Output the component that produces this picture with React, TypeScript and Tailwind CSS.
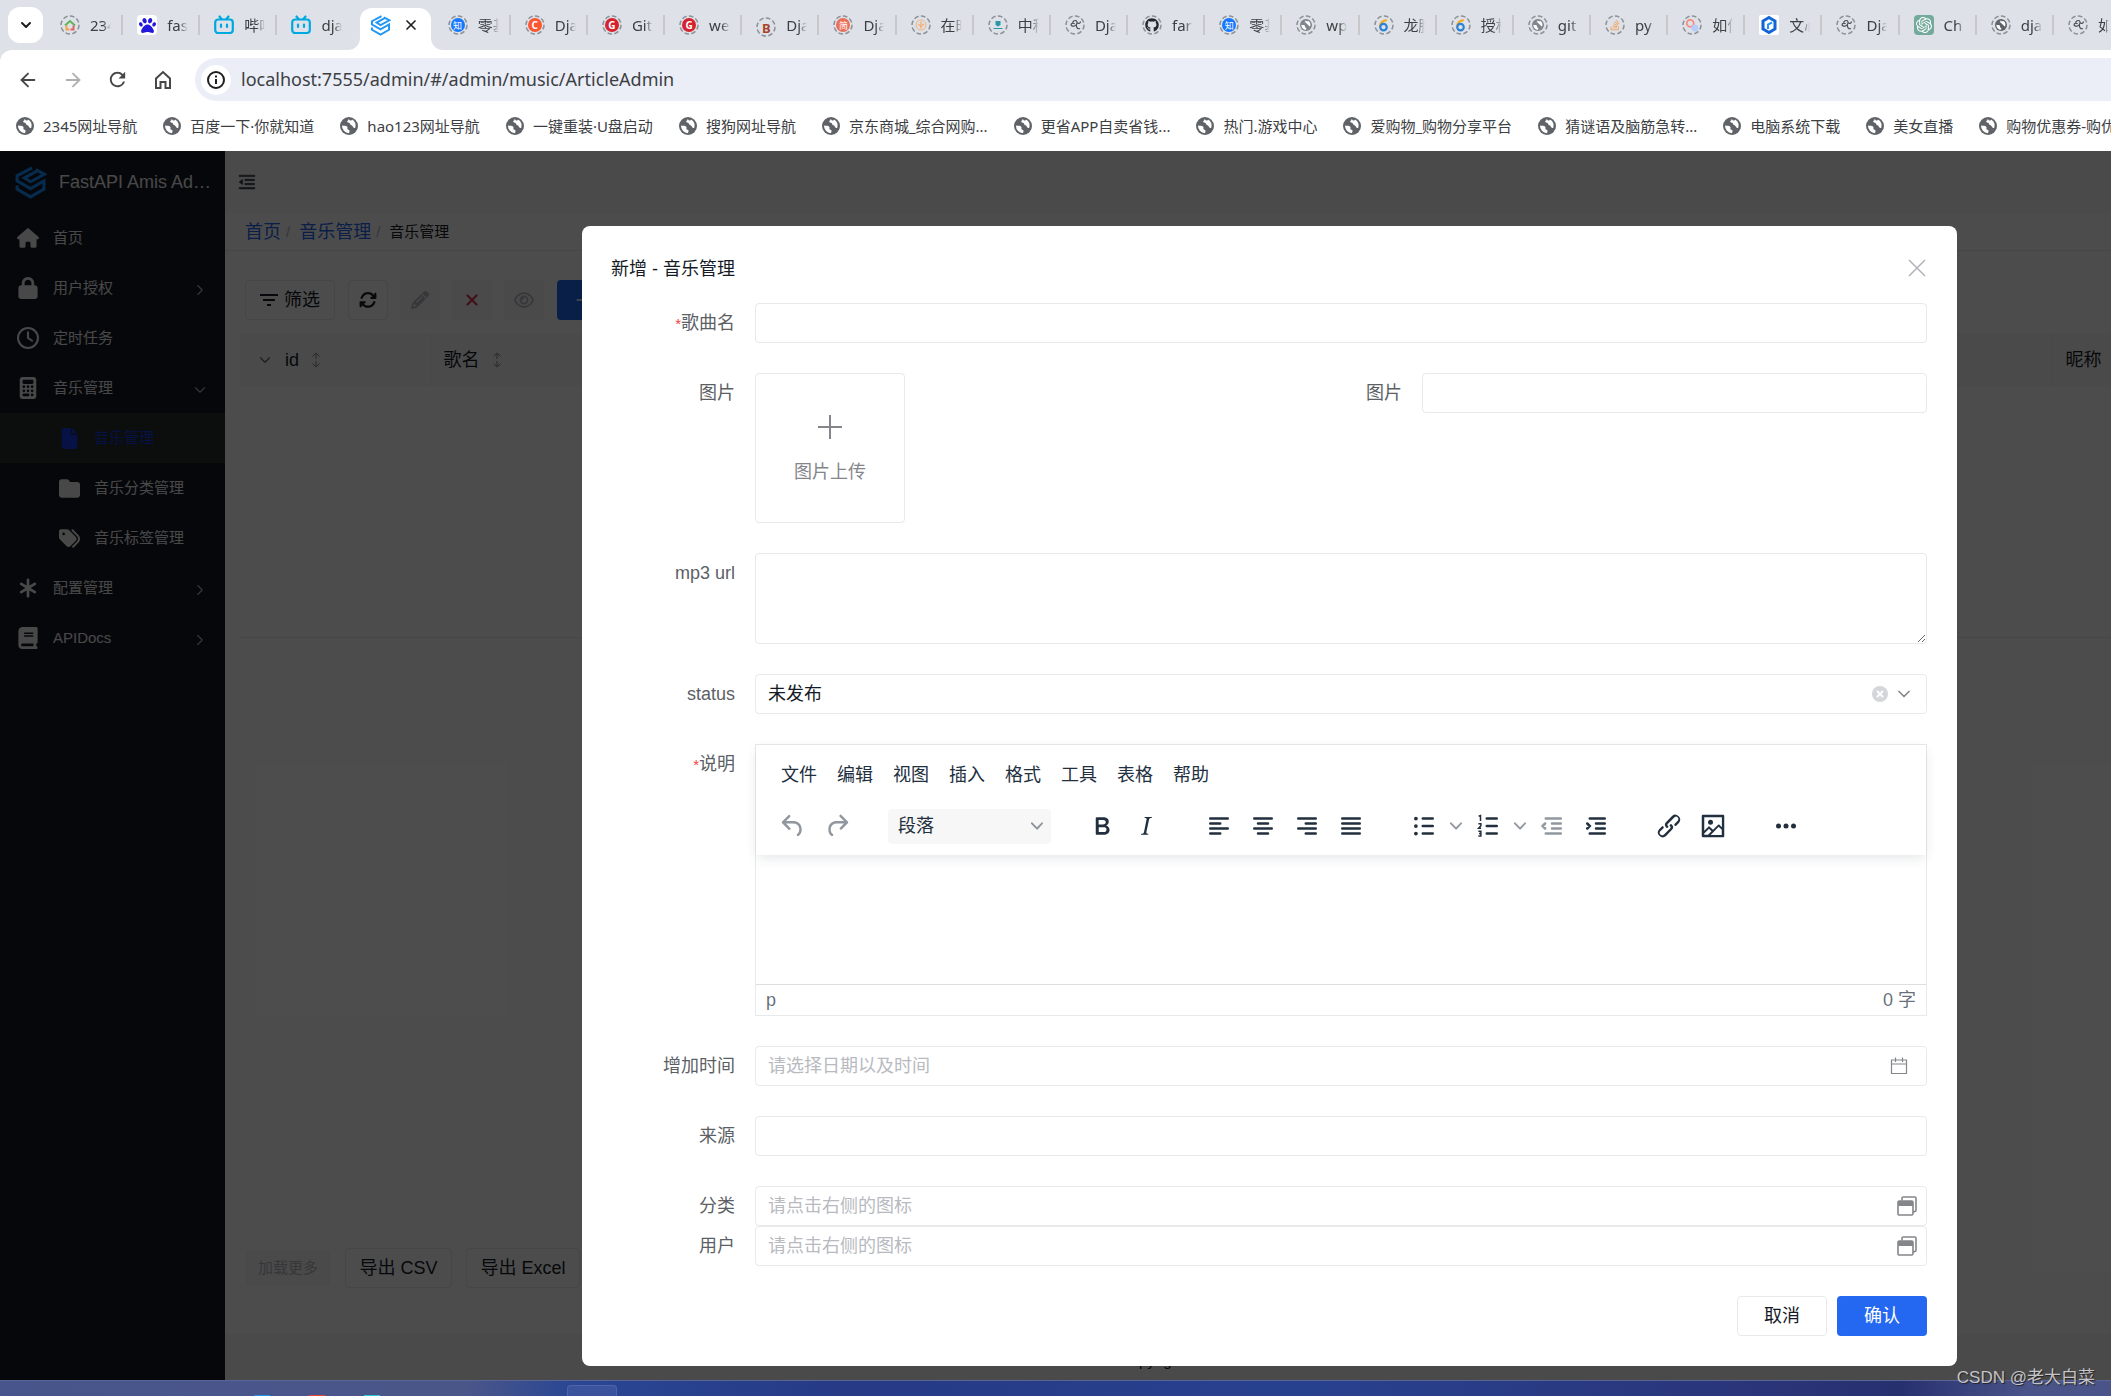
import { useState } from 'react'
import type { ReactNode } from 'react'
import clsx from 'clsx'
import { ArrowLeft, ArrowRight, ChevronDown, ChevronRight, Plus, X } from 'lucide-react'
import { AiOutlineMenuFold } from 'react-icons/ai'
import { MdRefresh } from 'react-icons/md'
import {
  FaArrowsRotate,
  FaAsterisk,
  FaBook,
  FaCalculator,
  FaFile,
  FaFolder,
  FaGithub,
  FaHouse,
  FaLock,
  FaPaw,
  FaPencil,
  FaRegClock,
  FaRegEye,
  FaStackOverflow,
  FaTags,
  FaXmark,
} from 'react-icons/fa6'
import { SiOpenai } from 'react-icons/si'

const UI_FONT = 'font-["Liberation_Sans","Noto_Sans_CJK_SC",sans-serif]'
const CHROME_FONT = 'font-["Noto_Sans","Noto_Sans_CJK_SC",sans-serif]'

/* ---------- small drawings ---------- */

function Globe({ className }: { className?: string }) {
  return (
    <svg viewBox="0 0 18 18" className={className} aria-hidden="true">
      <circle cx="9" cy="9" r="9" fill="currentColor" />
      <path
        d="M2 8.500c2 .6 4.200 0 5.200 1.200.9 1.100-.4 2 .6 2.900.8.7 1.900.2 1.700 1.600L9 16.200A7.300 7.300 0 0 1 2 8.500z"
        fill="#fff"
      />
      <path
        d="M8.500 1.800c.6 1.300-.9 1.600-1.300 2.500-.3.900.7 1.300 1.700 1.400 1.300.1.800 1.900 2.100 2.300 1.400.4 1.700 1.700 2.700 2.700.5.500 1.100.3 1.600 0A7.200 7.200 0 0 0 12 2.500c-.2 1-1.300 1.300-2 .9z"
        fill="#fff"
      />
    </svg>
  )
}

function AmisLogo({ className }: { className?: string }) {
  return (
    <svg viewBox="0 0 32 32" className={className} fill="none" stroke="currentColor" strokeWidth="3" aria-hidden="true">
      <path d="M17.500 1.800 3 9.500v5L16 22l13-7.500v8L16 30 3 22.500V19" />
      <path d="M23 4.500 10 11.500l6 3.800L29.500 8 21 3.500" />
    </svg>
  )
}

function Bilibili() {
  return (
    <svg viewBox="0 0 20 20" className="size-5" fill="none" stroke="#00a8e0" strokeWidth="2.200" strokeLinecap="round" aria-hidden="true">
      <rect x="1.200" y="4.500" width="17.600" height="13.500" rx="3" />
      <path d="M5.500 1.500 7.500 4M14.500 1.500 12.500 4M7 9.500v2.500M13 9.500v2.500" />
    </svg>
  )
}

type Favicon =
  | 'house' | 'baidu' | 'bili' | 'zhi' | 'c' | 'g' | 'three' | 'jian' | 'sun'
  | 'cloud' | 'scroll' | 'github' | 'globe' | 'six' | 'stack' | 'bubbles'
  | 'hex' | 'openai' | 'darkglobe'

const ringed: Partial<Record<Favicon, ReactNode>> = {
  house: (
    <svg viewBox="0 0 12 12" className="size-3" fill="none" strokeWidth="2">
      <path d="M1 6.500 6 2l5 4.500" stroke="#5fb35a" />
      <path d="M2.500 6.500v4h3" stroke="#f0a34a" />
      <path d="M6.500 10.500h3v-4" stroke="#e2606a" />
    </svg>
  ),
  zhi: <span className="flex size-[14px] items-center justify-center rounded-full bg-[#1677ff] text-[9px] leading-none text-white">知</span>,
  c: <span className="flex size-[14px] items-center justify-center rounded-full bg-[#fc5531] text-[10px] leading-none font-bold text-white">C</span>,
  g: <span className="flex size-[14px] items-center justify-center rounded-full bg-[#d4232f] text-[10px] leading-none font-bold text-white">G</span>,
  three: <span className="text-[13px] leading-none font-bold text-[#a8422c]">B</span>,
  jian: <span className="flex size-[14px] items-center justify-center rounded-full bg-[#ea6f5a] text-[9px] leading-none text-white">简</span>,
  sun: (
    <svg viewBox="0 0 12 12" className="size-3" fill="none" stroke="#f3b27a">
      <circle cx="6" cy="6" r="5" />
      <path d="M6 2.500v7M3 5l3 2.500L9 5" strokeWidth="1.500" />
    </svg>
  ),
  cloud: (
    <svg viewBox="0 0 12 12" className="size-3" fill="#2a97a5">
      <path d="M3.500 2h5v4l-2.500 1.500L3.500 6zM1.500 9h9v1h-9z" />
    </svg>
  ),
  scroll: (
    <svg viewBox="0 0 12 12" className="size-3" fill="none" stroke="#4b4f55" strokeWidth="1.200">
      <path d="M3.500 3.500C5 .5 8.500 1 8 4S4 8 2.500 6.500 4 3 5.500 5" />
      <path d="M8 4c2 1 3.500 0 3.500-1.500M7.500 5.500C7 8 8.500 10.500 11 9.500" />
    </svg>
  ),
  github: <FaGithub className="size-[14px] text-[#24292f]" />,
  globe: <Globe className="size-3 text-[#80868b]" />,
  darkglobe: <Globe className="size-3 text-[#5f6368]" />,
  six: (
    <svg viewBox="0 0 12 12" className="size-[13px]" fill="none" strokeWidth="2">
      <path d="M9 1C5 1.500 3 4 2.500 7" stroke="#f2a91f" />
      <circle cx="6" cy="7.500" r="3" stroke="#2b82d9" />
    </svg>
  ),
  stack: <FaStackOverflow className="size-3 text-[#f2a668]" />,
  bubbles: (
    <svg viewBox="0 0 12 12" className="size-[14px]">
      <circle cx="4.500" cy="4.500" r="3" fill="none" stroke="#f58a7c" strokeWidth="1.500" />
      <circle cx="8.500" cy="8.500" r="3" fill="#b5cdf8" />
    </svg>
  ),
}

function TabIcon({ kind }: { kind: Favicon }) {
  if (kind === 'bili') return <Bilibili />
  if (kind === 'baidu') {
    return (
      <span className="flex size-5 items-center justify-center rounded-sm bg-white">
        <FaPaw className="size-[17px] text-[#2319dc]" />
      </span>
    )
  }
  if (kind === 'hex') {
    return (
      <svg viewBox="0 0 20 20" className="size-5" aria-hidden="true">
        <rect width="20" height="20" rx="2" fill="#fff" />
        <path d="M10 2.500 16 6v8l-6 3.500L4 14V6z" fill="none" stroke="#1265d6" strokeWidth="3" />
        <path d="M9 14V9.500l4-2" fill="none" stroke="#2196f3" strokeWidth="2" />
      </svg>
    )
  }
  if (kind === 'openai') {
    return (
      <span className="flex size-5 items-center justify-center rounded bg-[#74aa9c]">
        <SiOpenai className="size-4 text-white" />
      </span>
    )
  }
  return (
    <span className="grid size-5 place-items-center">
      <svg viewBox="0 0 20 20" className="col-start-1 row-start-1 size-5" aria-hidden="true">
        <circle cx="10" cy="10" r="9" fill="none" stroke="#8d9297" strokeWidth="1.500" strokeDasharray="4.700 2.300" />
      </svg>
      <span className="col-start-1 row-start-1">{ringed[kind]}</span>
    </span>
  )
}

/* ---------- browser chrome ---------- */

type Tab = { icon: Favicon; title: string }

const tabsBefore: Tab[] = [
  { icon: 'house', title: '234' },
  { icon: 'baidu', title: 'fas' },
  { icon: 'bili', title: '哔哩' },
  { icon: 'bili', title: 'dja' },
]

const tabsAfter: Tab[] = [
  { icon: 'zhi', title: '零基' },
  { icon: 'c', title: 'Dja' },
  { icon: 'g', title: 'Git' },
  { icon: 'g', title: 'we' },
  { icon: 'three', title: 'Dja' },
  { icon: 'jian', title: 'Dja' },
  { icon: 'sun', title: '在时' },
  { icon: 'cloud', title: '中科' },
  { icon: 'scroll', title: 'Dja' },
  { icon: 'github', title: 'far' },
  { icon: 'zhi', title: '零基' },
  { icon: 'globe', title: 'wp' },
  { icon: 'six', title: '龙腾' },
  { icon: 'six', title: '授权' },
  { icon: 'globe', title: 'git' },
  { icon: 'stack', title: 'py' },
  { icon: 'bubbles', title: '如何' },
  { icon: 'hex', title: '文心' },
  { icon: 'scroll', title: 'Dja' },
  { icon: 'openai', title: 'Ch' },
  { icon: 'darkglobe', title: 'dja' },
]

function BrowserTab({ tab, divider = true }: { tab: Tab; divider?: boolean }) {
  return (
    <button
      type="button"
      className={clsx(
        'my-auto flex h-5 min-w-0 flex-1 items-center gap-[10px] border-r-2 pl-[14px]',
        divider ? 'border-[#c8c8cb]' : 'border-transparent',
      )}
    >
      <span className="shrink-0">
        <TabIcon kind={tab.icon} />
      </span>
      <span className="w-[21px] overflow-hidden text-left text-[15px] leading-5 whitespace-nowrap text-[#3c4043] [mask-image:linear-gradient(to_right,#000_60%,transparent)]">
        {tab.title}
      </span>
    </button>
  )
}

const bookmarks = [
  '2345网址导航',
  '百度一下·你就知道',
  'hao123网址导航',
  '一键重装·U盘启动',
  '搜狗网址导航',
  '京东商城_综合网购...',
  '更省APP自卖省钱...',
  '热门.游戏中心',
  '爱购物_购物分享平台',
  '猜谜语及脑筋急转...',
  '电脑系统下载',
  '美女直播',
  '购物优惠券-购优惠',
]

function BrowserChrome() {
  return (
    <header className={clsx('overflow-hidden bg-[#dee2e8]', CHROME_FONT)}>
      <div className="flex h-[50px]">
        <button type="button" aria-label="搜索标签页" className="my-[7px] ml-2 flex w-[35px] shrink-0 items-center justify-center rounded-xl bg-white">
          <ChevronDown className="size-4 text-[#1f1f1f]" strokeWidth={3} />
        </button>
        <div className="ml-[3px] flex min-w-0 flex-1">
          {tabsBefore.map((tab, index) => (
            <BrowserTab key={index} tab={tab} divider={index < 3} />
          ))}
          <div className="flex w-[79px] shrink-0 items-end pr-[3px] pl-[5px]">
            <div className="relative flex h-[42px] w-full items-center justify-between rounded-t-xl bg-white pr-3 pl-[10px] pb-2">
              <svg viewBox="0 0 12 12" className="absolute bottom-0 -left-3 size-3" aria-hidden="true">
                <path d="M12 0v12H0A12 12 0 0 0 12 0z" fill="#fff" />
              </svg>
              <AmisLogo className="size-[21px] text-[#2196f3]" />
              <button type="button" aria-label="关闭标签页">
                <X className="size-4 text-[#1f1f1f]" strokeWidth={2.5} />
              </button>
              <svg viewBox="0 0 12 12" className="absolute -right-3 bottom-0 size-3" aria-hidden="true">
                <path d="M0 0v12h12A12 12 0 0 1 0 0z" fill="#fff" />
              </svg>
            </div>
          </div>
          {tabsAfter.map((tab, index) => (
            <BrowserTab key={index} tab={tab} />
          ))}
          <div className="flex w-[57px] shrink-0 overflow-hidden">
            <BrowserTab tab={{ icon: 'scroll', title: '如何' }} divider={false} />
          </div>
        </div>
      </div>

      <div className="rounded-tl-xl bg-white">
        <div className="flex items-center pt-2 pl-[5px]">
          <button type="button" aria-label="后退" className="flex w-[45px] justify-center text-[#474747]">
            <ArrowLeft className="size-[22px]" />
          </button>
          <button type="button" aria-label="前进" className="flex w-[45px] justify-center text-[#b0b0b0]">
            <ArrowRight className="size-[22px]" />
          </button>
          <button type="button" aria-label="重新加载" className="flex w-[45px] justify-center text-[#474747]">
            <MdRefresh className="size-[23px]" />
          </button>
          <button type="button" aria-label="主页" className="flex w-[45px] justify-center text-[#474747]">
            <svg viewBox="0 0 20 20" className="size-5" fill="none" stroke="currentColor" strokeWidth="2" aria-hidden="true">
              <path d="M3 8.500 10 2l7 6.500V18h-4.500v-6h-5v6H3z" />
            </svg>
          </button>
          <div className="ml-[10px] flex h-[43px] flex-1 items-center rounded-l-full bg-[#ebeef7] pl-[6px]">
            <span className="flex size-[30px] items-center justify-center rounded-full bg-white">
              <svg viewBox="0 0 18 18" className="size-[18px]" fill="none" stroke="#1f1f1f" strokeWidth="2" aria-hidden="true">
                <circle cx="9" cy="9" r="8" />
                <path d="M9 8v5M9 4.500v2" />
              </svg>
            </span>
            <input
              aria-label="地址栏"
              className="ml-[10px] flex-1 bg-transparent text-[18px] text-[#3c4043] outline-none"
              defaultValue="localhost:7555/admin/#/admin/music/ArticleAdmin"
            />
          </div>
        </div>
        <nav className="flex h-[50px] items-center gap-[26px] overflow-hidden pl-4">
          {bookmarks.map((name) => (
            <a key={name} href="#" className="flex shrink-0 items-center gap-[9px] text-[15px] whitespace-nowrap text-[#3c4043]">
              <Globe className="size-[18px] text-[#5f6368]" />
              {name}
            </a>
          ))}
        </nav>
      </div>
    </header>
  )
}

/* ---------- admin page behind the dialog ---------- */

type MenuItem = {
  label: string
  icon: ReactNode
  arrow?: 'right' | 'down'
  sub?: boolean
  active?: boolean
}

const menu: MenuItem[] = [
  { label: '首页', icon: <FaHouse /> },
  { label: '用户授权', icon: <FaLock />, arrow: 'right' },
  { label: '定时任务', icon: <FaRegClock /> },
  { label: '音乐管理', icon: <FaCalculator />, arrow: 'down' },
  { label: '音乐管理', icon: <FaFile />, sub: true, active: true },
  { label: '音乐分类管理', icon: <FaFolder />, sub: true },
  { label: '音乐标签管理', icon: <FaTags />, sub: true },
  { label: '配置管理', icon: <FaAsterisk />, arrow: 'right' },
  { label: 'APIDocs', icon: <FaBook />, arrow: 'right' },
]

function Sidebar() {
  return (
    <aside className="w-[225px] shrink-0 bg-[#141923] text-[#f0f0f0]">
      <div className="flex h-[62px] items-center pl-[14px]">
        <AmisLogo className="size-[33px] shrink-0 text-[#1890ff]" />
        <span className="ml-3 w-[154px] truncate text-[18px]">FastAPI Amis Admin</span>
      </div>
      <ul>
        {menu.map((item, index) => (
          <li key={index}>
            <a
              href="#"
              className={clsx(
                'flex h-[50px] items-center gap-[14px] pr-4',
                item.sub ? 'pl-[58px]' : 'pl-[17px]',
                item.active && 'bg-[#282c2e] text-[#143ce6]',
              )}
            >
              <span className={clsx('flex w-[22px] justify-center', item.sub ? 'text-[21px]' : 'text-[22px]')}>
                {item.icon}
              </span>
              <span className="flex-1 text-[15px]">{item.label}</span>
              {item.arrow === 'right' && <ChevronRight className="mt-1 size-[18px] text-[#b4b6ba]" strokeWidth={1.5} />}
              {item.arrow === 'down' && <ChevronDown className="mt-1 size-[18px] text-[#b4b6ba]" strokeWidth={1.5} />}
            </a>
          </li>
        ))}
      </ul>
    </aside>
  )
}

function SortIcon() {
  return (
    <svg viewBox="0 0 10 16" className="h-4 w-[10px] text-[#84868c]" fill="none" stroke="currentColor" aria-hidden="true">
      <path d="M5 7V1M1.500 4.500 5 1l3.500 3.500M5 9v6M1.500 11.500 5 15l3.500-3.500" />
    </svg>
  )
}

function FilterIcon() {
  return (
    <svg viewBox="0 0 18 14" className="h-[14px] w-[18px]" fill="none" stroke="currentColor" strokeWidth="2" aria-hidden="true">
      <path d="M0 2h18M3 7h12M7 12h4" />
    </svg>
  )
}

const toolButton = 'flex size-10 items-center justify-center rounded'

function ListPage() {
  return (
    <div className="flex min-w-0 flex-1 flex-col bg-[#f7f7f9]">
      <div className="flex h-[62px] items-center pl-3">
        <button type="button" aria-label="收起菜单">
          <AiOutlineMenuFold className="size-5 text-[#151b26]/80" stroke="currentColor" strokeWidth="30" />
        </button>
      </div>
      <nav className="flex h-[38px] items-center border-b border-[#e8e9eb] bg-white pt-[2px] pl-5 text-[18px]">
        <a href="#" className="text-[#2468f2]">首页</a>
        <span className="mx-[5px] text-[15px] text-[#b8babf]">/</span>
        <a href="#" className="ml-1 text-[#2468f2]">音乐管理</a>
        <span className="mx-[5px] text-[15px] text-[#b8babf]">/</span>
        <span className="ml-1 text-[15px] text-[#151b26]">音乐管理</span>
      </nav>
      <div className="flex flex-1 flex-col bg-white">
        <div className="flex h-[69px] items-end gap-[13px] pl-5 text-[#151b26]">
          <button type="button" className="flex h-10 w-[90px] items-center justify-center gap-[6px] rounded border border-[#e8e9eb] text-[18px]">
            <FilterIcon />
            筛选
          </button>
          <div className="flex gap-3">
            <button type="button" aria-label="刷新" className={clsx(toolButton, 'border border-[#e8e9eb]')}>
              <FaArrowsRotate className="size-[18px]" />
            </button>
            <button type="button" aria-label="编辑" className={clsx(toolButton, 'bg-[#f7f7f9] text-[#b8babf]')}>
              <FaPencil className="size-[18px]" />
            </button>
            <button type="button" aria-label="删除" className={clsx(toolButton, 'bg-[#f7f7f9] text-[#e03a52]')}>
              <FaXmark className="size-[18px]" />
            </button>
            <button type="button" aria-label="查看" className={clsx(toolButton, 'bg-[#f7f7f9] text-[#b8babf]')}>
              <FaRegEye className="size-5" />
            </button>
          </div>
          <button type="button" className="flex h-10 items-center gap-2 rounded bg-[#2468f2] px-4 text-[18px] text-white">
            <Plus className="size-5" />
            新增
          </button>
        </div>
        <div className="mt-[13px] ml-[15px] h-[305px] border-b border-[#e8e9eb]">
          <table className="w-full table-fixed text-left text-[18px] text-[#151b26]">
            <thead>
              <tr className="h-[54px] bg-[#f7f7f9]">
                <th className="w-[191px] border-r border-[#f0f0f2] pl-[16px] font-normal">
                  <span className="flex items-center">
                    <ChevronDown className="mr-[11px] size-[18px] text-[#5c5f66]" strokeWidth={1.5} />
                    id
                    <span className="ml-3"><SortIcon /></span>
                  </span>
                </th>
                <th className="border-r border-[#f0f0f2] pl-3 font-normal">
                  <span className="flex items-center gap-3">
                    歌名
                    <SortIcon />
                  </span>
                </th>
                <th className="w-[59px] pl-[13px] font-normal whitespace-nowrap">昵称</th>
              </tr>
            </thead>
          </table>
        </div>
        <div className="mt-auto flex items-center gap-[14px] pb-[46px] pl-5 text-[18px] text-[#151b26]">
          <button type="button" disabled className="h-9 w-[86px] rounded bg-[#f7f7f9] text-[15px] text-[#b8babf]">加载更多</button>
          <button type="button" className="h-10 w-[107px] rounded border border-[#e8e9eb]">导出 CSV</button>
          <button type="button" className="h-10 w-[114px] rounded border border-[#e8e9eb]">导出 Excel</button>
        </div>
      </div>
      <footer className="flex h-[46px] items-end justify-center pr-8 pb-2 text-[15px] text-[#151b26]">Copyright</footer>
    </div>
  )
}

/* ---------- dialog ---------- */

const control = 'block h-10 w-full rounded border border-[#e8e9eb] bg-white px-3 text-[18px] text-[#151b26] outline-none placeholder:text-[#b8babf]'

function Field({ id, label, required, children }: { id: string; label: string; required?: boolean; children: ReactNode }) {
  return (
    <div className="flex flex-1 items-start gap-5">
      <label htmlFor={id} className="w-[124px] shrink-0 text-right text-[18px] leading-10 text-[#5c5f66]">
        {required && <span className="text-[15px] leading-none text-[#f33e3e]">*</span>}
        {label}
      </label>
      <div className="min-w-0 flex-1">{children}</div>
    </div>
  )
}

function ToolButton({ label, muted, children }: { label: string; muted?: boolean; children: ReactNode }) {
  return (
    <button
      type="button"
      aria-label={label}
      className={clsx('flex h-[42px] w-11 items-center justify-center', muted ? 'text-[#222f3e]/50' : 'text-[#222f3e]')}
    >
      <svg viewBox="0 0 24 24" className="size-[30px]" fill="currentColor" fillRule="evenodd">
        {children}
      </svg>
    </button>
  )
}

function SmallChevron() {
  return (
    <svg viewBox="0 0 10 10" className="size-3 shrink-0 text-[#222f3e]/50" fill="currentColor" aria-hidden="true">
      <path d="M8.700 2.200c.3-.3.8-.3 1 0 .4.4.4.9 0 1.200L5.700 7.800c-.3.3-.9.3-1.200 0L.2 3.400a.8.8 0 0 1 0-1.200c.3-.3.8-.3 1.100 0L5 6l3.700-3.800z" />
    </svg>
  )
}

function Lines({ d }: { d: string }) {
  return <path d={d} fill="none" stroke="currentColor" strokeWidth="2" strokeLinecap="round" />
}

const editorMenus = ['文件', '编辑', '视图', '插入', '格式', '工具', '表格', '帮助']

function RichEditor() {
  return (
    <div className="border border-[#e8e9eb]">
      <div className="relative h-[110px] bg-white shadow-[0_4px_12px_-2px_rgba(34,47,62,0.14)]">
        <div className="flex h-[60px] items-center gap-5 pl-[25px] text-[18px] text-[#222f3e]">
          {editorMenus.map((name) => (
            <button key={name} type="button">{name}</button>
          ))}
        </div>
        <div className="flex h-[42px] items-center gap-[29px] pl-[15px]">
          <div className="flex">
            <ToolButton label="撤销" muted>
              <path d="M6.400 8H12c3.700 0 6.200 2 6.800 5.100.6 2.700-.4 5.600-2.300 6.800a1 1 0 0 1-1-1.800c1.100-.6 1.800-2.700 1.400-4.600-.5-2.100-2.100-3.500-4.900-3.500H6.400l3.300 3.300a1 1 0 1 1-1.400 1.400l-5-5a1 1 0 0 1 0-1.400l5-5a1 1 0 0 1 1.400 1.400L6.400 8z" />
            </ToolButton>
            <ToolButton label="重做" muted>
              <path d="M17.600 10H12c-2.800 0-4.400 1.400-4.900 3.500-.4 2 .3 4 1.400 4.600a1 1 0 1 1-1 1.800c-2-1.200-2.900-4.100-2.300-6.800.6-3 3-5.100 6.800-5.100h5.600l-3.300-3.300a1 1 0 1 1 1.400-1.400l5 5a1 1 0 0 1 0 1.400l-5 5a1 1 0 0 1-1.400-1.400l3.300-3.300z" />
            </ToolButton>
          </div>
          <button type="button" className="flex h-[35px] w-[163px] items-center justify-between rounded bg-[#f7f7f7] pr-2 pl-[10px] text-[18px] text-[#222f3e]">
            段落
            <SmallChevron />
          </button>
          <div className="flex">
            <ToolButton label="粗体">
              <path d="M7.800 19c-.3 0-.5 0-.6-.2l-.2-.5V5.700c0-.2 0-.4.2-.5l.6-.2h5c1.500 0 2.700.3 3.500 1 .7.6 1.100 1.400 1.100 2.500a3 3 0 0 1-.6 1.900c-.4.6-1 1-1.600 1.200.4.1.9.3 1.300.6s.8.7 1 1.200c.4.4.5 1 .5 1.600 0 1.300-.4 2.300-1.300 3-.8.7-2.100 1-3.800 1H7.800zm5-8.300c.6 0 1.200-.1 1.600-.5.4-.3.6-.7.6-1.300 0-1.100-.8-1.700-2.300-1.700H9.300v3.500h3.400zm.5 6c.7 0 1.300-.1 1.700-.4.4-.4.6-.9.6-1.500s-.2-1-.7-1.400c-.4-.3-1-.4-2-.4H9.400v3.800h4z" />
            </ToolButton>
            <ToolButton label="斜体">
              <path d="M16.700 4.700l-.1.9h-.3c-.6 0-1 0-1.400.3-.3.3-.4.6-.5 1.100l-2.100 9.800v.6c0 .5.4.8 1.400.8h.2l-.2.8H8l.2-.8h.2c1.100 0 1.800-.5 2-1.500l2-9.800.1-.5c0-.6-.4-.8-1.400-.8h-.3l.2-.9h5.800z" />
            </ToolButton>
          </div>
          <div className="flex">
            <ToolButton label="左对齐"><Lines d="M5 6h14M5 10h8M5 14h14M5 18h8" /></ToolButton>
            <ToolButton label="居中"><Lines d="M5 6h14M8 10h8M5 14h14M8 18h8" /></ToolButton>
            <ToolButton label="右对齐"><Lines d="M5 6h14M11 10h8M5 14h14M11 18h8" /></ToolButton>
            <ToolButton label="两端对齐"><Lines d="M5 6h14M5 10h14M5 14h14M5 18h14" /></ToolButton>
          </div>
          <div className="flex items-center">
            <ToolButton label="项目符号列表">
              <Lines d="M11 6h8M11 12h8M11 18h8" />
              <circle cx="5.500" cy="6" r="1.500" />
              <circle cx="5.500" cy="12" r="1.500" />
              <circle cx="5.500" cy="18" r="1.500" />
            </ToolButton>
            <button type="button" aria-label="项目符号样式" className="flex w-5 justify-center"><SmallChevron /></button>
            <ToolButton label="编号列表">
              <Lines d="M11 6h8M11 12h8M11 18h8" />
              <path d="M4.500 4.200 6 3.700V8M4.300 10.200h2v1.600l-1.800 2h2M4.300 16.200h2v3.700h-2M4.800 18h1.500" fill="none" stroke="currentColor" strokeWidth="1.200" />
            </ToolButton>
            <button type="button" aria-label="编号样式" className="flex w-5 justify-center"><SmallChevron /></button>
            <ToolButton label="减少缩进" muted><Lines d="M7 6h12M12 10h7M12 14h7M7 18h12M6.500 10l-2 2 2 2" /></ToolButton>
            <ToolButton label="增加缩进"><Lines d="M7 6h12M12 10h7M12 14h7M7 18h12M5 10l2 2-2 2" /></ToolButton>
          </div>
          <div className="flex">
            <ToolButton label="链接">
              <path d="M6.200 12.300a1 1 0 0 1 1.400 1.400l-2.100 2a2 2 0 1 0 2.700 2.800l4.800-4.800a1 1 0 0 0 0-1.400 1 1 0 1 1 1.400-1.300 2.900 2.900 0 0 1 0 4L9.600 20a3.900 3.900 0 0 1-5.500-5.500l2-2zm11.600-.6a1 1 0 0 1-1.400-1.400l2-2a2 2 0 1 0-2.600-2.800L11 10.300a1 1 0 0 0 0 1.400A1 1 0 1 1 9.600 13a2.900 2.900 0 0 1 0-4L14.400 4a3.900 3.900 0 0 1 5.500 5.500l-2 2z" />
            </ToolButton>
            <ToolButton label="图片">
              <path d="M5 15.700l3.300-3.200c.3-.3.7-.3 1 0L12 15l4.100-4c.3-.4.8-.4 1 0l2 1.900V5H5v10.700zM5 18V19h3l2.800-2.900-2-2L5 17.900zm14-3l-2.500-2.400-6.400 6.500H19v-4zM4 3h16c.6 0 1 .4 1 1v16c0 .6-.4 1-1 1H4a1 1 0 0 1-1-1V4c0-.6.4-1 1-1zm6 8a2 2 0 1 0 0-4 2 2 0 0 0 0 4z" />
            </ToolButton>
          </div>
          <ToolButton label="更多">
            <circle cx="6" cy="12" r="2" />
            <circle cx="12" cy="12" r="2" />
            <circle cx="18" cy="12" r="2" />
          </ToolButton>
        </div>
      </div>
      <textarea id="content" className="block h-[129px] w-full resize-none p-3 text-[18px] outline-none" />
      <div className="flex h-[31px] items-center justify-between border-t border-[#dcdee0] px-[10px] text-[18px] text-[#222f3e]/70">
        <span>p</span>
        <span>0 字</span>
      </div>
    </div>
  )
}

function PickerField({ id, label }: { id: string; label: string }) {
  return (
    <Field id={id} label={label}>
      <div className="flex h-10 items-center rounded border border-[#e8e9eb] pr-[9px] pl-3">
        <input
          id={id}
          placeholder="请点击右侧的图标"
          className="min-w-0 flex-1 text-[18px] outline-none placeholder:text-[#b8babf]"
        />
        <button type="button" aria-label="选择" className="text-[#84868c]">
          <svg viewBox="0 0 20 20" className="size-5" fill="none" stroke="currentColor" strokeWidth="1.600">
            <path d="M5 4.500V2.300A1.300 1.300 0 0 1 6.300 1h11.400A1.300 1.300 0 0 1 19 2.300v12a1.300 1.300 0 0 1-1.300 1.300H16" />
            <rect x="1" y="5" width="15" height="14" rx="1.300" />
            <path d="M1 5h15v5H1z" fill="currentColor" stroke="none" />
          </svg>
        </button>
      </div>
    </Field>
  )
}

function ArticleDialog() {
  const [status, setStatus] = useState('draft')

  return (
    <div role="dialog" aria-label="新增 - 音乐管理" className="min-w-0 flex-1 self-start rounded-lg bg-white pr-[30px] pb-[30px] pl-[29px]">
      <div className="flex h-[77px] items-center justify-between pt-[7px]">
        <h2 className="pt-[3px] text-[18px] text-[#151b26]">新增 - 音乐管理</h2>
        <button type="button" aria-label="关闭" className="text-[#b0b2b8]">
          <svg viewBox="0 0 20 20" className="size-5" fill="none" stroke="currentColor" strokeWidth="1.500">
            <path d="M2 2l16 16M18 2 2 18" />
          </svg>
        </button>
      </div>

      <form className="flex flex-col gap-[30px]">
        <Field id="name" label="歌曲名" required>
          <input id="name" className={control} />
        </Field>

        <div className="flex gap-[18px]">
          <Field id="upload" label="图片">
            <button id="upload" type="button" className="flex size-[150px] flex-col items-center justify-center gap-5 rounded border border-[#e8e9eb] pt-1 text-[18px] text-[#84868c]">
              <svg viewBox="0 0 24 24" className="size-6" fill="none" stroke="currentColor" strokeWidth="2">
                <path d="M12 0v24M0 12h24" />
              </svg>
              图片上传
            </button>
          </Field>
          <Field id="image-url" label="图片">
            <input id="image-url" className={control} />
          </Field>
        </div>

        <Field id="mp3" label="mp3 url">
          <textarea id="mp3" className="block h-[91px] w-full resize-y rounded border border-[#e8e9eb] p-3 text-[18px] outline-none" />
        </Field>

        <Field id="status" label="status">
          <div className="flex h-10 items-center rounded border border-[#e8e9eb] pr-3 pl-3">
            <select
              id="status"
              value={status}
              onChange={(e) => setStatus(e.target.value)}
              className="min-w-0 flex-1 appearance-none bg-transparent text-[18px] text-[#151b26] outline-none"
            >
              <option value="draft">未发布</option>
              <option value="published">已发布</option>
            </select>
            <button type="button" aria-label="清除" className="mr-[6px]">
              <svg viewBox="0 0 16 16" className="size-4">
                <circle cx="8" cy="8" r="8" fill="#d4d6da" />
                <path d="M5 5l6 6M11 5l-6 6" stroke="#fff" strokeWidth="1.800" />
              </svg>
            </button>
            <ChevronDown className="size-5 text-[#84868c]" strokeWidth={2} />
          </div>
        </Field>

        <Field id="content" label="说明" required>
          <RichEditor />
        </Field>

        <Field id="created" label="增加时间">
          <div className="flex h-10 items-center rounded border border-[#e8e9eb] pr-[18px] pl-3">
            <input
              id="created"
              placeholder="请选择日期以及时间"
              className="min-w-0 flex-1 text-[18px] outline-none placeholder:text-[#b8babf]"
            />
            <svg viewBox="0 0 18 18" className="size-[18px] text-[#84868c]" fill="none" stroke="currentColor" strokeWidth="1.200" aria-hidden="true">
              <path d="M1.500 3h15v13.500h-15zM1.500 7h15M5.500.5V5M12.500.5V5" />
            </svg>
          </div>
        </Field>

        <Field id="source" label="来源">
          <input id="source" className={control} />
        </Field>

        <div>
          <PickerField id="category" label="分类" />
          <PickerField id="user" label="用户" />
        </div>

        <div className="flex justify-end gap-[10px] text-[18px]">
          <button type="button" className="h-10 w-[90px] rounded border border-[#e8e9eb] text-[#151b26]">取消</button>
          <button type="submit" className="h-10 w-[90px] rounded bg-[#2468f2] text-white">确认</button>
        </div>
      </form>
    </div>
  )
}

function Taskbar() {
  return (
    <div className="flex h-4 items-end overflow-hidden border-t border-[#5a6596] bg-[linear-gradient(90deg,#47558c_0%,#4b5688_22%,#2a4794_27%,#263a86_40%,#28418f_62%,#2a3478_84%,#27306f_90%,#4a5488_96%)]">
      <div className="ml-[254px] flex gap-[39px]">
        <span className="h-px w-4 bg-[#1e96e8]" />
        <span className="h-px w-4 bg-[#e8463c]" />
        <span className="h-px w-4 bg-[#2cc5dc]" />
      </div>
      <div className="ml-[187px] h-[11px] w-[50px] rounded-t border border-b-0 border-[#4f65a8] bg-[#3b539d]" />
    </div>
  )
}

export default function App() {
  return (
    <div className="relative flex min-h-screen flex-col overflow-hidden">
      <BrowserChrome />
      <div className={clsx('relative flex flex-1', UI_FONT)}>
        <Sidebar />
        <ListPage />
        <div className="absolute inset-0 flex bg-black/70 pt-[75px] pr-[154px] pl-[582px]">
          <ArticleDialog />
        </div>
      </div>
      <Taskbar />
      <span className={clsx('absolute right-4 bottom-[6px] text-[17px] text-[#c4c4c8] [text-shadow:1px_1px_1px_#222]', UI_FONT)}>
        CSDN @老大白菜
      </span>
    </div>
  )
}
